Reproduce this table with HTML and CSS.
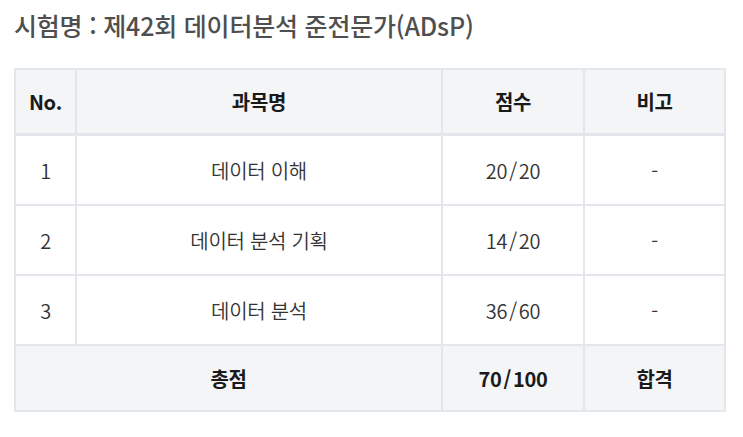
FILE: index.html
```html
<!DOCTYPE html>
<html lang="ko">
<head>
<meta charset="utf-8">
<link rel="stylesheet" href="styles.css">
</head>
<body>
<div class="page">
  <h1 class="title">시험명 : 제42회 데이터분석 준전문가(ADsP)</h1>
  <table class="score">
    <colgroup>
      <col class="c-no"><col class="c-subj"><col class="c-score"><col class="c-note">
    </colgroup>
    <thead>
      <tr class="head"><th>No.</th><th>과목명</th><th>점수</th><th>비고</th></tr>
    </thead>
    <tbody>
      <tr class="row"><td>1</td><td>데이터 이해</td><td>20<span class="sl">/</span>20</td><td>-</td></tr>
      <tr class="row"><td>2</td><td>데이터 분석 기획</td><td>14<span class="sl">/</span>20</td><td>-</td></tr>
      <tr class="row"><td>3</td><td>데이터 분석</td><td>36<span class="sl">/</span>60</td><td>-</td></tr>
    </tbody>
    <tfoot>
      <tr class="foot"><th colspan="2">총점</th><th>70<span class="sl">/</span>100</th><th>합격</th></tr>
    </tfoot>
  </table>
</div>
</body>
</html>
```

FILE: styles.css
```css
html, body {
  margin: 0;
  padding: 0;
  background: #ffffff;
}
body {
  font-family: "Noto Sans CJK KR", "Noto Sans", sans-serif;
}
.page {
  padding: 7px 19px 0 14px;
}
.title {
  margin: 0;
  font-size: 25px;
  line-height: 36px;
  font-weight: 500;
  color: #4f4f4f;
  letter-spacing: -0.2px;
}
.score {
  margin-top: 25px;
  width: 710px;
  border-collapse: collapse;
  table-layout: fixed;
  font-size: 20px;
  color: #333333;
  letter-spacing: -0.3px;
}
.c-no { width: 61px; }
.c-subj { width: 366px; }
.c-score { width: 142px; }
.c-note { width: 141px; }
.score th, .score td {
  border: 2px solid #e3e6ea;
  text-align: center;
  padding: 0;
}
.score th {
  font-weight: 700;
  color: #1a1a1a;
  background: #f4f5f7;
}
.head th {
  height: 63px;
  border-bottom-width: 3px;
}
.row td {
  height: 68px;
  font-weight: 350;
}
.foot th {
  height: 64px;
}
.sl {
  margin: 0 2px;
}
```
